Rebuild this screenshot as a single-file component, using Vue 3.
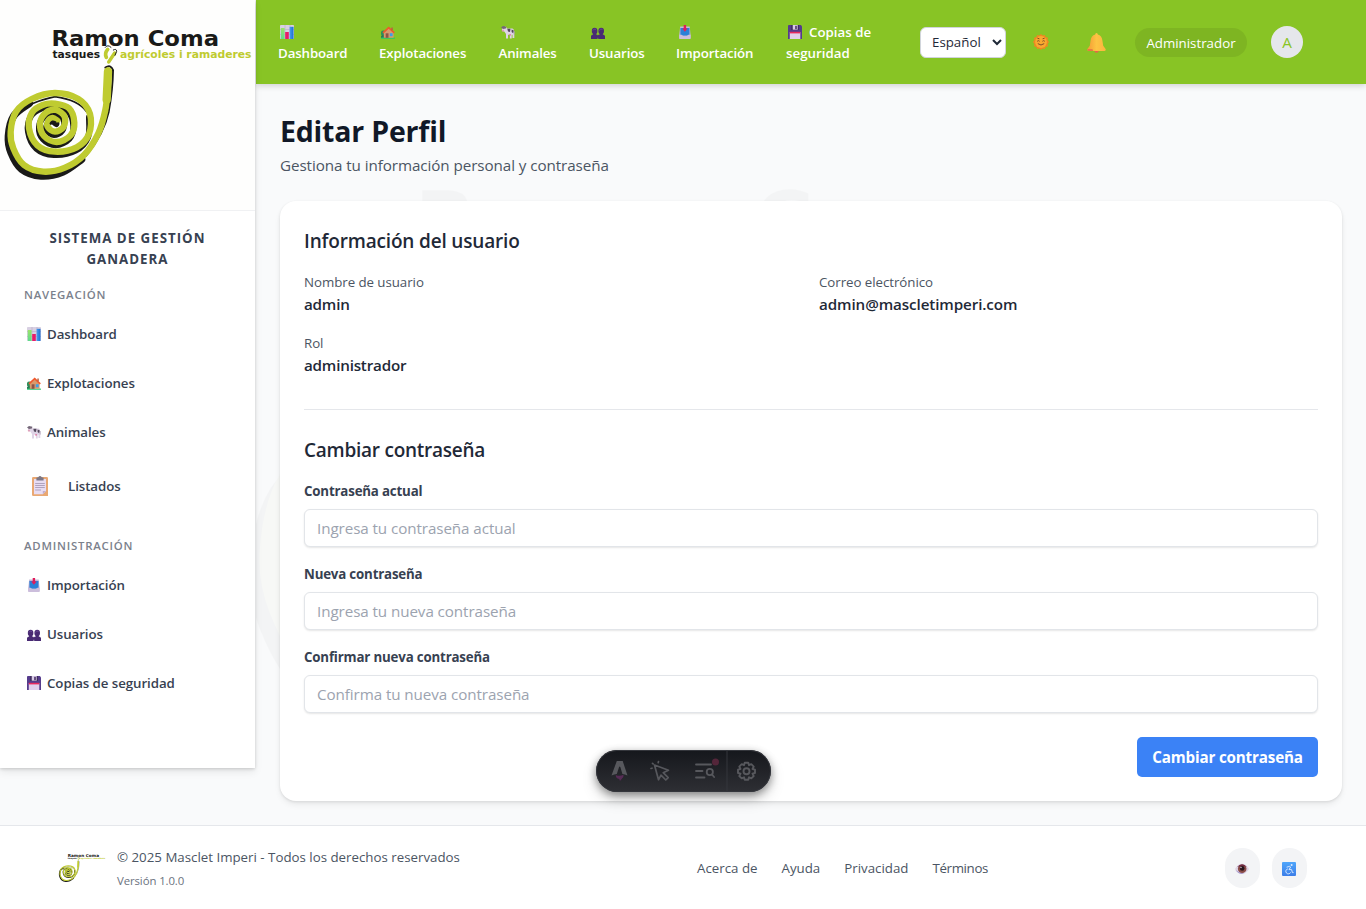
<script setup>
const spiralPoints = [
  [325, 212], [323, 265], [316, 330], [295, 400], [252, 465], [195, 503], [130, 515], [72, 495],
  [40, 445], [32, 395], [48, 335], [95, 297], [165, 279], [235, 297], [270, 342], [267, 402],
  [230, 442], [165, 455], [112, 436], [87, 385], [96, 338], [128, 315], [165, 311], [207, 325],
  [223, 368], [211, 407], [170, 426], [132, 408], [120, 370], [138, 338], [168, 330], [194, 350],
  [190, 382], [165, 395], [144, 382], [144, 364], [158, 354], [172, 362]
]

// Catmull-Rom spline through every point, written as cubic segments
function smoothPath(points) {
  let d = `M${points[0][0]} ${points[0][1]}`
  for (let i = 0; i < points.length - 1; i++) {
    const a = points[Math.max(i - 1, 0)]
    const b = points[i]
    const c = points[i + 1]
    const e = points[Math.min(i + 2, points.length - 1)]
    d += `C${b[0] + (c[0] - a[0]) / 6} ${b[1] + (c[1] - a[1]) / 6} ${c[0] - (e[0] - b[0]) / 6} ${c[1] - (e[1] - b[1]) / 6} ${c[0]} ${c[1]}`
  }
  return d
}

const spiral = smoothPath(spiralPoints)
const shadowOuter = smoothPath(spiralPoints.slice(4, 12))
const shadowInner = smoothPath(spiralPoints.slice(14))

const topNav = [
  { icon: 'chart', text: 'Dashboard' },
  { icon: 'house', text: 'Explotaciones' },
  { icon: 'cow', text: 'Animales' },
  { icon: 'users', text: 'Usuarios' },
  { icon: 'inbox', text: 'Importación' }
]
const mainNav = [
  { icon: 'chart', text: 'Dashboard' },
  { icon: 'house', text: 'Explotaciones' },
  { icon: 'cow', text: 'Animales' }
]
const adminNav = [
  { icon: 'inbox', text: 'Importación' },
  { icon: 'users', text: 'Usuarios' },
  { icon: 'disk', text: 'Copias de seguridad' }
]
const fields = [
  { label: 'Contraseña actual', hint: 'Ingresa tu contraseña actual' },
  { label: 'Nueva contraseña', hint: 'Ingresa tu nueva contraseña' },
  { label: 'Confirmar nueva contraseña', hint: 'Confirma tu nueva contraseña' }
]
</script>

<template>
  <div class="page">
    <svg class="defs" width="0" height="0" aria-hidden="true">
      <defs>
        <linearGradient id="gGreen" x1="0" y1="0" x2="0" y2="1"><stop offset="0" stop-color="#9be36a" /><stop offset="1" stop-color="#5fdc8c" /></linearGradient>
        <linearGradient id="gBlue" x1="0" y1="0" x2="1" y2="0"><stop offset="0" stop-color="#4a9df0" /><stop offset="1" stop-color="#1b6fd0" /></linearGradient>
        <linearGradient id="gBell" x1="0" y1="0" x2="1" y2="0"><stop offset="0" stop-color="#f59a34" /><stop offset=".5" stop-color="#fcc443" /><stop offset="1" stop-color="#fdb43e" /></linearGradient>
        <linearGradient id="gAcc" x1="0" y1="0" x2="0" y2="1"><stop offset="0" stop-color="#4fa6fb" /><stop offset="1" stop-color="#3c7ee8" /></linearGradient>
        <symbol id="logo" viewBox="0 0 256 210">
          <text x="51.5" y="46" class="lg lg1" textLength="167.5" lengthAdjust="spacingAndGlyphs">Ramon Coma</text>
          <text x="52.5" y="58" class="lg lg2" textLength="47.5" lengthAdjust="spacingAndGlyphs">tasques</text>
          <text x="120" y="58" class="lg lg3" textLength="131.5" lengthAdjust="spacingAndGlyphs">agrícoles i ramaderes</text>
          <g transform="scale(.33333)" fill="none" stroke-linecap="round" stroke-linejoin="round">
            <path :d="shadowOuter" stroke="#1a1a18" stroke-width="22" transform="translate(-7 13)" />
            <path :d="shadowInner" stroke="#1a1a18" stroke-width="18" transform="translate(-3 10)" />
            <path d="M316 203Q332 192 339 210Q338 270 326 335Q312 400 258 468" stroke="#1a1a18" stroke-width="6" />
            <path d="M62 332Q90 307 165 290Q235 300 260 335" stroke="#1a1a18" stroke-width="5" />
            <path :d="spiral" stroke="#bfcb30" stroke-width="19" />
            <path d="M324 214L320 300" stroke="#bfcb30" stroke-width="25" />
            <path d="M163 366Q158 362 152 370M160 366Q170 366 166 373Q171 378 174 370" stroke="#1a1a18" stroke-width="7" />
            <path d="M319 172Q313 160 323 148" stroke="#bfcb30" stroke-width="11" />
            <path d="M316 142Q323 132 333 142" stroke="#1a1a18" stroke-width="3" />
            <path d="M326 186L344 159" stroke="#bfcb30" stroke-width="10" />
            <path d="M340 150Q350 145 350 154L345 166" stroke="#1a1a18" stroke-width="3" />
          </g>
        </symbol>
        <symbol id="chart" viewBox="0 0 14 14">
          <rect width="14" height="14" rx=".8" fill="#d8d0e2" /><path d="M0 4.5H14M0 9.5H14M5 0V14M10 0V14" stroke="#bdb1cc" stroke-width=".7" />
          <rect x=".8" y="3" width="3.8" height="11" fill="url(#gGreen)" /><rect x="5.2" y="7" width="3.6" height="7" fill="#e81c68" /><rect x="9.6" y="1.8" width="3.9" height="12.2" fill="url(#gBlue)" />
        </symbol>
        <symbol id="house" viewBox="0 0 14 14">
          <circle cx="2.4" cy="8.2" r="2.6" fill="#2f8f5b" /><path d="M0 11Q3 8.5 6 11V13H0Z" fill="#277a55" /><rect y="12.4" width="14" height="1.4" rx=".6" fill="#27c56f" />
          <path d="M2.8 7.5L7.7 3L12.6 7.5V12.8H2.8Z" fill="#d99a6c" /><rect x="4.7" y="8.3" width="2.8" height="4.5" fill="#8b5548" /><rect x="8.8" y="8.2" width="2.8" height="3" fill="#3ba0e8" />
          <path d="M2 7.8L7.7 2.7L13.3 7.8" fill="none" stroke="#f0582c" stroke-width="1.6" /><rect x="10.3" y="2.5" width="1.5" height="2.7" fill="#b9603e" />
        </symbol>
        <symbol id="cow" viewBox="0 0 14 14">
          <path d="M1 3.2L4.8 1.6L6 3.6H11.5Q13.5 4.2 13.3 8V13H11.5V9.8H10.7V13.6H8.9V9.8H7V13.4H5V9L3.3 6.5L1 5.7Z" fill="#dfd4e6" />
          <path d="M0 2.5L2 1L5.4 1.8L4.8 3.4L2 3.9Z" fill="#736777" /><path d="M6.3 3.8H9.5L9 7L7 6.6ZM10.6 4.6L12.8 5.5L12.2 8.2L10.6 7Z" fill="#53485b" />
          <path d="M.8 4.7H3V6.4H1Z" fill="#dda0ba" /><path d="M8.2 9.3H10V10.5H8.2Z" fill="#df6f9a" /><path d="M13.2 6V9.6" stroke="#a597ad" stroke-width=".7" />
        </symbol>
        <symbol id="users" viewBox="0 0 14 14">
          <g fill="#482a73"><ellipse cx="3.6" cy="6" rx="2.8" ry="3.2" /><ellipse cx="10.2" cy="6" rx="2.8" ry="3.2" /><path d="M0 14V11.3Q.3 9.9 2.1 9.6V7H5.2V9.6Q6.6 9.8 6.9 10.6Q7.3 9.8 8.7 9.6V7H11.8V9.6Q13.7 9.9 14 11.3V14H7.2V12.8H6.6V14Z" /></g>
          <path d="M2 5.4Q3 3.2 5 4.4M8.4 5.4Q9.7 3.2 11.5 4.4" fill="none" stroke="#70509b" stroke-width=".8" />
        </symbol>
        <symbol id="inbox" viewBox="0 0 14 14">
          <path d="M2.2 1.6H11.7L12.6 10V13.2H1.2V10Z" fill="#c5b7d7" /><path d="M2.4 3H11.5V10.6H2.4Z" fill="#2a80d8" /><path d="M1.2 9.8H3.6Q5 11.6 7 11.6T10.4 9.8H12.6V13.4Q12.6 14 12 14H1.8Q1.2 14 1.2 13.4Z" fill="#ccbedc" />
          <path d="M5.7 0H8.1V3.4H9.7L6.9 6.8L4.1 3.4H5.7Z" fill="#e01c5a" />
        </symbol>
        <symbol id="disk" viewBox="0 0 14 14">
          <path d="M0 .9Q0 0 .9 0H12.8L14 1.2V14H0Z" fill="#553b8c" /><path d="M3.4 0H10.7V5H3.4Z" fill="#382750" /><path d="M4.7 0H9.7V4.7H4.7Z" fill="#d9cce8" /><rect x="7.2" y=".8" width="1.6" height="3.4" fill="#4b3268" />
          <rect x="1.8" y="7" width="10.5" height="7" fill="#e1cfed" /><rect x="1.8" y="6.8" width="10.5" height="1.6" fill="#e8285e" />
        </symbol>
        <symbol id="clip" viewBox="0 0 16 20">
          <path d="M1.2 1H14.8Q16 1 16 2.2V20H1.2Q0 20 0 18.8V2.2Q0 1 1.2 1Z" fill="#e9a873" /><path d="M2 3H14V15L10.8 18.3H2Z" fill="#e8dcf2" /><path d="M14 15L10.8 18.3V15Z" fill="#bfafd0" />
          <path d="M4.4 1.8Q5 1.2 6.2 1.2Q8-1 9.8 1.2Q11 1.2 11.6 1.8V4.5H4.4Z" fill="#7c7785" /><path d="M3.2 7.5H12.8M3.2 9.5H12.8M3.2 11.5H12.8M3.2 14H9" stroke="#a99bb8" stroke-width=".9" />
        </symbol>
        <symbol id="sun" viewBox="0 0 16 16">
          <path d="M8 0L9.6 1.5L11.8 .9L12.7 2.9L15 3.7L14.6 6L16 8L14.6 9.9L15 12.3L12.7 13.1L11.8 15.1L9.6 14.5L8 16L6.4 14.5L4.2 15.1L3.3 13.1L1 12.3L1.4 9.9L0 8L1.4 6L1 3.7L3.3 2.9L4.2 .9L6.4 1.5Z" fill="#f18722" /><circle cx="8" cy="8" r="5.9" fill="#f9a92f" />
          <path d="M4.4 4.2L6.4 4.8M11.6 4.2L9.6 4.8M4.2 7.3Q5.4 6 6.6 7.3M9.4 7.3Q10.6 6 11.8 7.3M4.8 9.6Q8 12.4 11.2 9.6" fill="none" stroke="#6f4428" stroke-width=".9" />
        </symbol>
        <symbol id="bell" viewBox="0 0 19 20">
          <circle cx="9.5" cy="17.5" r="2.2" fill="#e66549" /><path d="M9.5 0Q10.8 0 10.8 1.6Q14.8 2.6 15.4 7.4L16.2 12.8L18.6 16Q19.2 17.7 17.6 17.9H1.4Q-.2 17.7 .4 16L2.8 12.8L3.6 7.4Q4.2 2.6 8.2 1.6Q8.2 0 9.5 0Z" fill="url(#gBell)" /><path d="M.5 16H5.4L6.2 17.9H1.4Q.1 17.7.5 16Z" fill="#e67b43" />
        </symbol>
        <symbol id="eye" viewBox="0 0 14 12">
          <path d="M0 6Q3 .8 7 .8T14 6Q11 11 7 11T0 6Z" fill="#ded4e6" /><path d="M.5 7Q4 12 9 10.6L4 9Z" fill="#a99acb" /><circle cx="7.2" cy="5.7" r="4.3" fill="#8a4c48" /><circle cx="7.2" cy="5.4" r="2.3" fill="#28151c" /><path d="M2 4Q7-1.7 12 4L7 2.8Z" fill="#69213c" opacity=".85" /><circle cx="6" cy="4.5" r=".7" fill="#dcd2e8" />
        </symbol>
        <symbol id="access" viewBox="0 0 14 14">
          <rect width="14" height="14" rx="1" fill="url(#gAcc)" /><circle cx="9.6" cy="3" r="1" fill="#dcebff" /><path d="M4.6 5.2L7.6 4.4L8.6 5L7 7.6H9.6L10.4 10.6H11.6M5.8 6.9A2.5 2.5 0 1 0 8.6 10.4" fill="none" stroke="#dcebff" stroke-width=".95" />
        </symbol>
      </defs>
    </svg>

    <aside class="sidebar">
      <div class="brand"><svg class="brand-logo"><use href="#logo" /></svg></div>
      <h2 class="system">SISTEMA DE GESTIÓN<br />GANADERA</h2>
      <p class="group g1">NAVEGACIÓN</p>
      <a v-for="n in mainNav" :key="n.text" class="side-link"><svg class="ico"><use :href="'#' + n.icon" /></svg><span>{{ n.text }}</span></a>
      <a class="side-link listados"><svg class="ico-clip"><use href="#clip" /></svg><span>Listados</span></a>
      <p class="group g2">ADMINISTRACIÓN</p>
      <a v-for="n in adminNav" :key="n.text" class="side-link"><svg class="ico"><use :href="'#' + n.icon" /></svg><span>{{ n.text }}</span></a>
    </aside>

    <div class="content">
      <header class="topbar">
        <nav class="top-nav">
          <a v-for="n in topNav" :key="n.text" class="top-link"><span class="line"><svg class="ico"><use :href="'#' + n.icon" /></svg></span><span class="line">{{ n.text }}</span></a>
          <a class="top-link wide"><span class="line"><svg class="ico"><use href="#disk" /></svg>Copias de</span><span class="line">seguridad</span></a>
        </nav>
        <select class="lang"><option>Español</option></select>
        <svg class="sun"><use href="#sun" /></svg>
        <svg class="bell"><use href="#bell" /></svg>
        <span class="role">Administrador</span>
        <span class="avatar">A</span>
      </header>

      <main class="main">
        <svg class="watermark" aria-hidden="true"><use href="#logo" /></svg>
        <h1>Editar Perfil</h1>
        <p class="sub">Gestiona tu información personal y contraseña</p>
        <section class="card">
          <h3 class="first">Información del usuario</h3>
          <dl class="info">
            <div><dt>Nombre de usuario</dt><dd>admin</dd></div>
            <div><dt>Correo electrónico</dt><dd class="mail">admin@mascletimperi.com</dd></div>
            <div><dt>Rol</dt><dd>administrador</dd></div>
          </dl>
          <h3 class="second">Cambiar contraseña</h3>
          <form>
            <label v-for="f in fields" :key="f.label" class="field"><span>{{ f.label }}</span><input type="password" :placeholder="f.hint" /></label>
            <div class="actions"><button type="button">Cambiar contraseña</button></div>
          </form>
        </section>
      </main>
    </div>

    <footer class="footer">
      <svg class="foot-logo"><use href="#logo" /></svg>
      <div class="legal"><p class="copy">© 2025 Masclet Imperi - Todos los derechos reservados</p><p class="ver">Versión 1.0.0</p></div>
      <nav class="foot-nav"><a>Acerca de</a><a>Ayuda</a><a>Privacidad</a><a class="terms">Términos</a></nav>
      <div class="foot-btns"><span class="round"><svg class="eye"><use href="#eye" /></svg></span><span class="round"><svg class="ico access"><use href="#access" /></svg></span></div>
    </footer>

    <div class="devbar">
      <svg width="175" height="42" viewBox="0 0 175 42" fill="none" stroke-linecap="round" stroke-linejoin="round">
        <path d="M131 1V41" stroke="#34363d" />
        <path d="M15.5 25.5L20.8 11H26.7L31.5 25.5Q28.8 24.3 26.4 24L24.4 17.3Q23.7 15.8 23 17.3L20.8 24Q18.5 24.3 15.5 25.5Z" fill="#57585d" />
        <path d="M19.8 25Q23.7 26.8 27.5 24.8Q28 27.8 25.8 28.8L24 31L23.2 29Q19.6 28.5 19.8 25Z" fill="#562b55" />
        <g stroke="#57585d" stroke-width="1.7"><path d="M58.5 15L72.5 20.3L67.2 22.7L72.2 27.6L69.8 30L65 25.2L62.5 29.8Z" /><path d="M55 18.5L56 18.2M56.5 13.3L57.2 14M62.5 11.5L62.2 12.7" /></g>
        <g stroke="#57585d" stroke-width="1.8"><path d="M100 14.5H115M100 21H106.5M100 27.5H108.5" /><circle cx="113.8" cy="22" r="3.1" /><path d="M116 24.5L118.1 27" /></g>
        <circle cx="119.5" cy="12" r="3.5" fill="#54263a" />
        <g stroke="#57585d" stroke-width="1.9" transform="translate(-.5)"><path d="M149.2 12.8H152.8L153.5 15.2L155.8 14.2L158.2 16.6L157 19L159.5 19.7V23L157 23.7L158.2 26.1L155.8 28.4L153.5 27.3L152.8 29.8H149.2L148.5 27.3L146.2 28.4L143.8 26.1L145 23.7L142.5 23V19.7L145 19L143.8 16.6L146.2 14.2L148.5 15.2Z" /><circle cx="151" cy="21.3" r="3" /></g>
      </svg>
    </div>
  </div>
</template>

<style>
body { margin: 0; background: #f9fafb; }
</style>

<style scoped>
* { box-sizing: border-box; }
h1, h2, h3, p, dl, dd { margin: 0; }
.page { position: relative; width: 1366px; height: 909px; overflow: hidden; display: grid; grid-template: 825px 84px / 256px 1110px; background: #f9fafb; color: #1f2937; font-family: "Open Sans", "Noto Sans", sans-serif; font-size: 15.2px; }
.defs { position: absolute; }
.lg { font-family: "DejaVu Sans", sans-serif; font-weight: 700; }
.lg1 { font-size: 22px; fill: #1a1a18; }
.lg2 { font-size: 11px; fill: #1a1a18; }
.lg3 { font-size: 11px; fill: #bfcb30; }
.ico { width: 14px; height: 14px; flex: none; }

.sidebar { position: relative; z-index: 2; height: 768px; width: 255px; background: #fff; box-shadow: 0 1px 3px rgba(0,0,0,.16), 0 4px 8px rgba(0,0,0,.08); }
.brand { height: 211px; border-bottom: 1px solid #f0f1f3; background: #fefefd; }
.brand-logo { display: block; width: 256px; height: 210px; }
.system { padding-top: 17px; text-align: center; font-size: 13.3px; line-height: 21px; font-weight: 700; color: #374151; letter-spacing: 1px; }
.group { padding-left: 24px; font-size: 11.4px; line-height: 18px; font-weight: 600; color: #7b818c; letter-spacing: .78px; }
.g1 { margin-top: 16px; margin-bottom: 5px; }
.g2 { margin-top: 22px; margin-bottom: 5px; }
.side-link { display: flex; align-items: center; height: 49px; padding-left: 27px; gap: 6px; font-size: 13.3px; font-weight: 600; color: #374151; letter-spacing: -.08px; }
.listados { height: 59px; padding-left: 32px; gap: 20px; }
.ico-clip { width: 16px; height: 20px; }

.content { min-width: 0; }
.topbar { position: relative; z-index: 1; display: flex; align-items: center; height: 84px; padding-left: 22px; background: #88c425; box-shadow: 0 2px 6px rgba(0,0,0,.16); }
.top-nav { display: grid; grid-template-columns: 69px 87.5px 58.5px 55px 78px 102px; gap: 32px; height: 42px; }
.top-link { display: flex; flex-direction: column; color: #fff; font-size: 13.3px; font-weight: 600; white-space: nowrap; letter-spacing: -.12px; }
.wide { letter-spacing: 0; }
.line { display: flex; align-items: center; gap: 7px; height: 21px; }
.line .ico { margin-left: 2px; }
.lang { width: 86px; height: 31px; margin-left: 32px; padding: 0 0 0 7px; border: 1px solid #d1d5db; border-radius: 6px; background: #fff; color: #1f2937; font: 13.3px "Open Sans", "Noto Sans", sans-serif; }
.sun { width: 16px; height: 16px; margin-left: 27px; }
.bell { width: 19px; height: 20px; margin-left: 38px; margin-top: 2px; }
.role { width: 112px; height: 29px; margin-left: 29px; border-radius: 15px; background: #7eb522; color: #fff; font-size: 13.3px; line-height: 30px; text-align: center; }
.avatar { width: 32px; height: 32px; margin-left: 24px; border-radius: 50%; background: #e5e7eb; color: #88c425; text-align: center; line-height: 33px; font-size: 15.2px; }

.main { position: relative; height: 741px; padding: 29px 24px 24px; overflow: hidden; }
.watermark { position: absolute; left: -23px; top: 2px; width: 904px; height: 741px; opacity: .02; }
h1 { position: relative; font-size: 28.5px; line-height: 36px; font-weight: 700; color: #111827; letter-spacing: -.2px; }
.sub { position: relative; margin-top: 4px; line-height: 24px; color: #4b5563; letter-spacing: -.07px; }
.card { position: relative; height: 600px; margin-top: 24px; padding: 26px 24px 24px; border-radius: 16px; background: #fff; box-shadow: 0 1px 3px rgba(0,0,0,.1), 0 4px 6px rgba(0,0,0,.06); }
h3 { font-size: 19px; line-height: 28px; font-weight: 600; color: #1f2937; letter-spacing: -.25px; }
.first { letter-spacing: -.17px; }
.info { display: grid; grid-template-columns: 1fr 1fr; gap: 16px; height: 139px; margin-top: 16px; border-bottom: 1px solid #e5e7eb; align-content: start; }
.info > div { height: 45px; }
dt { padding-top: 1px; font-size: 13.3px; line-height: 20px; color: #4b5563; letter-spacing: -.05px; }
dd { font-size: 15.2px; line-height: 24px; font-weight: 600; color: #1f2937; letter-spacing: -.2px; }
.mail { letter-spacing: -.1px; }
.second { margin-top: 26px; }
form { margin-top: 17px; }
.field { display: block; margin-bottom: 17px; }
.field span { display: block; height: 21px; margin-bottom: 7px; font-size: 13.3px; line-height: 21px; font-weight: 700; color: #374151; letter-spacing: -.18px; }
.field input { display: block; width: 100%; height: 38px; padding: 0 12px; border: 1px solid #e2e5e9; border-radius: 6px; outline: 0; background: #fff; box-shadow: 0 1px 2px rgba(0,0,0,.1); font: 15.2px "Open Sans", "Noto Sans", sans-serif; letter-spacing: -.08px; }
.field input::placeholder { color: #9ca3af; opacity: 1; }
.actions { display: flex; justify-content: flex-end; padding-top: 7px; }
button { width: 181px; height: 40px; padding: 0; border: 0; border-radius: 5px; background: #3b82f6; color: #fff; font: 700 15.2px "Open Sans", "Noto Sans", sans-serif; white-space: nowrap; letter-spacing: -.17px; }

.footer { grid-column: 1 / 3; display: flex; align-items: center; padding-left: 57px; border-top: 1px solid #e5e7eb; background: #fff; color: #4b5563; font-size: 13.3px; }
.foot-logo { width: 48px; height: 40px; flex: none; margin-right: 1px; margin-left: 1px; }
.legal { width: 590px; padding-left: 10px; }
.copy { margin-top: 1px; line-height: 21px; }
.ver { margin-top: 4px; line-height: 18px; font-size: 11.4px; color: #6b7280; letter-spacing: -.1px; }
.foot-nav { display: flex; gap: 24px; width: 528px; }
.terms { letter-spacing: -.35px; }
.foot-btns { display: flex; gap: 12px; }
.round { display: flex; align-items: center; justify-content: center; width: 35px; height: 40px; border-radius: 18px; background: #f3f4f6; }
.eye { width: 14px; height: 12px; margin-top: 2px; margin-right: 2px; }
.access { margin-top: 2px; margin-right: 1px; }

.devbar { position: absolute; z-index: 5; left: 596px; top: 750px; width: 175px; height: 42px; border-radius: 21px; background: linear-gradient(#15171c, #2e2f34); box-shadow: inset 0 0 0 1px #34363c, 0 3px 8px rgba(0,0,0,.42), 0 8px 16px rgba(0,0,0,.14); }
.devbar svg { display: block; }
</style>
